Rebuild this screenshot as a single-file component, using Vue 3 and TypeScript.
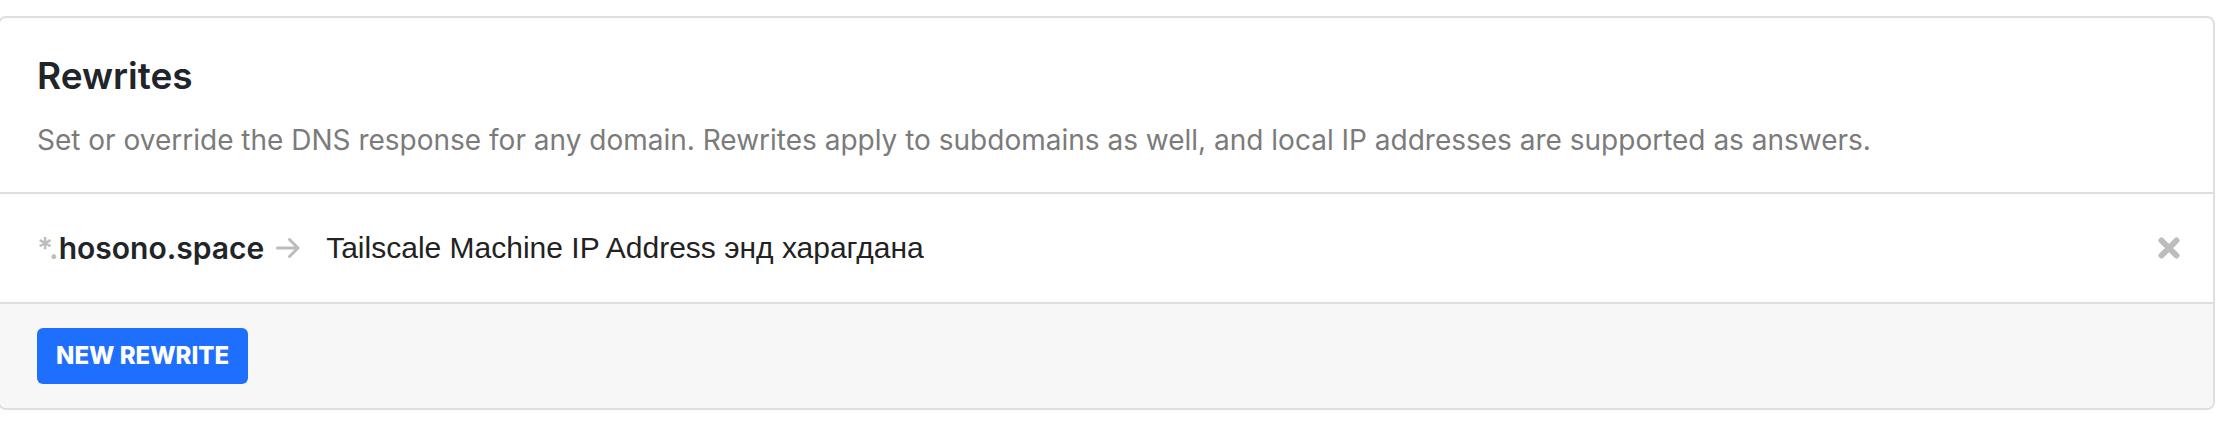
<script setup lang="ts">
import { ref } from 'vue'

interface Rewrite {
  id: number
  domain: string
  answer: string
}

const rewrites = ref<Rewrite[]>([
  { id: 1, domain: 'hosono.space', answer: 'Tailscale Machine IP Address энд харагдана' },
])

function remove(id: number) {
  rewrites.value = rewrites.value.filter((item) => item.id !== id)
}
</script>

<template>
  <section class="card" aria-labelledby="rewrites-title">
    <header class="card-header">
      <h2 id="rewrites-title" class="title">Rewrites</h2>
      <p class="description">
        Set or override the DNS response for any domain. Rewrites apply to subdomains as well, and local IP addresses are supported as answers.
      </p>
    </header>
    <ul class="list">
      <li v-for="item in rewrites" :key="item.id" class="row">
        <span class="domain"><span class="wildcard">*.</span>{{ item.domain }}</span>
        <svg class="arrow" viewBox="0 0 24 20" aria-hidden="true">
          <path d="M1.5 10H22M13.5 1.5L22 10L13.5 18.5" />
        </svg>
        <span class="answer">{{ item.answer }}</span>
        <button class="remove" type="button" aria-label="Remove rewrite" @click="remove(item.id)">
          <svg class="cross" viewBox="0 0 22 22" aria-hidden="true">
            <path d="M3.5 3.5L18.5 18.5M18.5 3.5L3.5 18.5" />
          </svg>
        </button>
      </li>
    </ul>
    <footer class="card-footer">
      <button class="primary" type="button">NEW REWRITE</button>
    </footer>
  </section>
</template>

<style>
body {
  background: #fff;
}
</style>

<style scoped>
.card {
  margin: 16px 19px 0 -2px;
  border: 2px solid #dfdfdf;
  border-radius: 8px;
  overflow: hidden;
  font-family: Inter, 'Liberation Sans', sans-serif;
  color: #212529;
}

.card-header {
  padding: 32px 37px 30px;
}

.title {
  margin: 0 0 16px;
  font-size: 37px;
  font-weight: 600;
  line-height: 52px;
}

.description {
  margin: 0;
  font-size: 28px;
  line-height: 44px;
  color: #7b7b7b;
}

.list {
  margin: 0;
  padding: 0;
  list-style: none;
}

.row {
  display: flex;
  align-items: center;
  box-sizing: border-box;
  min-height: 110px;
  padding: 0 33px 0 37px;
  border-top: 2px solid #dfdfdf;
}

.domain {
  font-size: 30px;
  font-weight: 600;
  line-height: 46px;
}

.wildcard {
  color: #bdbdbd;
}

.arrow {
  width: 24px;
  height: 20px;
  margin: 0 26px 0 12px;
}

.arrow path,
.cross path {
  fill: none;
  stroke: #bdbdbd;
  stroke-width: 3;
  stroke-linecap: round;
  stroke-linejoin: round;
}

.answer {
  flex: 1;
  font-family: 'Liberation Sans', Arial, sans-serif;
  font-size: 30px;
  line-height: 46px;
  color: #222;
}

.remove {
  display: flex;
  padding: 0;
  border: 0;
  background: none;
  cursor: pointer;
}

.cross {
  width: 22px;
  height: 22px;
}

.cross path {
  stroke-width: 6;
}

.card-footer {
  padding: 24px 37px;
  border-top: 2px solid #dfdfdf;
  background: #f7f7f7;
}

.primary {
  display: block;
  padding: 0 19px;
  border: 0;
  border-radius: 6px;
  background: #1f6fff;
  color: #fff;
  font-family: inherit;
  font-size: 24px;
  font-weight: 800;
  line-height: 56px;
  cursor: pointer;
}
</style>
